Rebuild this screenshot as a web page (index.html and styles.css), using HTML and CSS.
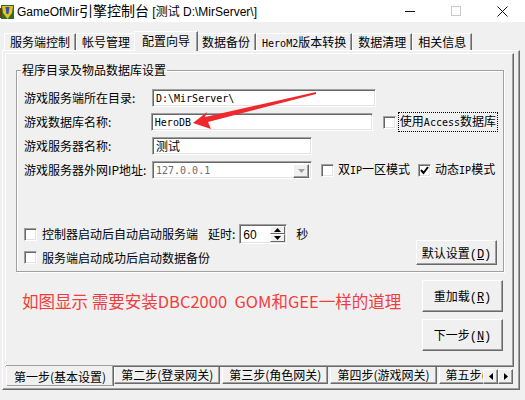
FILE: index.html
```html
<!DOCTYPE html>
<html>

<head>
    <meta charset="utf-8">
    <title>GameOfMir引擎控制台</title>
    <link rel="stylesheet" href="styles.css">
</head>

<body>
    <div class="titlebar">
        <svg class="appicon" width="15" height="16" viewBox="0 0 15 16">
            <rect x="1" y="1" width="13" height="14" fill="#2f6b2b" />
            <path d="M2 2 L13 2 L12 9 L7.5 15 L3 9 Z" fill="#e6c21a" />
            <path d="M5.5 3 L9.5 3 L8.5 10 L6.5 10 Z" fill="#2b4fb5" />
            <rect x="0" y="4" width="2" height="10" fill="#6b3d12" />
        </svg>
        <span class="title">GameOfMir<span class="cjk">引擎控制台</span> [测试 D:\MirServer\]</span>
        <div class="winbtns">
            <span class="wb"><i class="min"></i></span>
            <span class="wb"><i class="max"></i></span>
            <span class="wb">
                <svg width="11" height="11" viewBox="0 0 11 11">
                    <path d="M0.5 0.5 L10.5 10.5 M10.5 0.5 L0.5 10.5" stroke="#111" stroke-width="1" />
                </svg>
            </span>
        </div>
    </div>

    <div class="tabs">
        <div class="tab">服务端控制</div>
        <div class="tab">帐号管理</div>
        <div class="tab active">配置向导</div>
        <div class="tab">数据备份</div>
        <div class="tab"><span class="latin">HeroM2</span>版本转换</div>
        <div class="tab">数据清理</div>
        <div class="tab">相关信息</div>
    </div>

    <div class="page">
        <div class="wpage">
            <fieldset class="group">
                <legend>程序目录及物品数据库设置</legend>
                <div class="fields">
                    <div class="row">
                        <span class="lbl">游戏服务端所在目录:</span>
                        <div class="edit wide">D:\MirServer\</div>
                    </div>
                    <div class="row">
                        <span class="lbl">游戏数据库名称:</span>
                        <div class="edit wide">HeroDB</div>
                        <span class="cb cb-access"></span>
                        <span class="cblabel focus">使用<span class="latin">Access</span>数据库</span>
                    </div>
                    <div class="row">
                        <span class="lbl">游戏服务器名称:</span>
                        <div class="edit narrow">测试</div>
                    </div>
                    <div class="row">
                        <span class="lbl">游戏服务器外网IP地址:</span>
                        <div class="edit narrow combo">
                            <span class="ctext">127.0.0.1</span>
                            <span class="drop">
                                <svg width="7" height="4" viewBox="0 0 7 4"><path d="M0 0 H7 L3.5 4 Z" fill="#a0a0a0" /></svg>
                            </span>
                        </div>
                        <span class="cb cb-dual"></span>
                        <span class="cblabel">双<span class="latin">IP</span>一区模式</span>
                        <span class="cb cb-dyn">
                            <svg width="11" height="11" viewBox="0 0 11 11"><path d="M2 5 L4.5 8 L9 2" stroke="#000" stroke-width="2" fill="none" /></svg>
                        </span>
                        <span class="cblabel">动态<span class="latin">IP</span>模式</span>
                    </div>
                </div>

                <div class="bottom">
                    <div class="checks">
                        <div class="crow first">
                            <span class="cb"></span>
                            <span class="clabel">控制器启动后自动启动服务端</span>
                            <span class="delay">延时:</span>
                            <div class="spin">
                                <span class="val">60</span>
                                <span class="arrows">
                                    <span class="sbtn"><svg width="7" height="4" viewBox="0 0 7 4"><path d="M0 4 H7 L3.5 0 Z" fill="#000" /></svg></span>
                                    <span class="sbtn"><svg width="7" height="4" viewBox="0 0 7 4"><path d="M0 0 H7 L3.5 4 Z" fill="#000" /></svg></span>
                                </span>
                            </div>
                            <span class="sec">秒</span>
                        </div>
                        <div class="crow">
                            <span class="cb"></span>
                            <span class="clabel">服务端启动成功后启动数据备份</span>
                        </div>
                    </div>
                    <button class="btn">默认设置(<u>D</u>)</button>
                </div>
            </fieldset>

            <div class="lower">
                <p class="note">如图显示 需要安装DBC2000&nbsp; GOM和GEE一样的道理</p>
                <div class="btncol">
                    <button class="btn tall">重加载(<u>R</u>)</button>
                    <button class="btn tall">下一步(<u>N</u>)</button>
                </div>
            </div>
        </div>

        <div class="wtabs">
            <div class="strip">
                <div class="wtab active">第一步(基本设置)</div>
                <div class="wtab">第二步(登录网关)</div>
                <div class="wtab">第三步(角色网关)</div>
                <div class="wtab">第四步(游戏网关)</div>
                <div class="wtab">第五步(数据库服务)</div>
            </div>
            <div class="scroll">
                <span class="sbtn2"><svg width="4" height="7" viewBox="0 0 4 7"><path d="M4 0 V7 L0 3.5 Z" fill="#000" /></svg></span>
                <span class="sbtn2"><svg width="4" height="7" viewBox="0 0 4 7"><path d="M0 0 V7 L4 3.5 Z" fill="#000" /></svg></span>
            </div>
        </div>
    </div>

    <!-- 标注箭头 -->
    <svg class="arrow" width="525" height="400" viewBox="0 0 525 400">
        <polygon points="193,123 207,112 205,117 316,92 316,94 208,122 211,129" fill="#f0272b" />
    </svg>
</body>

</html>
```

FILE: styles.css
```css
* {
    box-sizing: border-box;
}

html,
body {
    margin: 0;
    padding: 0;
}

body {
    width: 525px;
    height: 400px;
    overflow: hidden;
    position: relative;
    background-color: #f0f0f0;
    font-family: "Noto Sans CJK SC", sans-serif;
    font-size: 12px;
    line-height: 16px;
    color: #000;
}

.latin {
    font-family: "DejaVu Sans Mono", monospace;
    font-size: 10px;
}

/* タイトルバー */
.titlebar {
    height: 22px;
    background-color: #fff;
    display: flex;
    align-items: center;
}

.appicon {
    margin-top: 1px;
}

.title {
    margin-left: 2px;
    font-family: "Liberation Sans", "Noto Sans CJK SC", sans-serif;
    font-size: 12px;
}

.title .cjk {
    font-family: "Noto Sans CJK SC", sans-serif;
    font-size: 14px;
}

.winbtns {
    margin-left: auto;
    display: flex;
}

.wb {
    width: 46px;
    height: 22px;
    display: flex;
    align-items: center;
    justify-content: center;
}

.wb .min {
    width: 10px;
    height: 1px;
    background-color: #111;
}

.wb .max {
    width: 10px;
    height: 10px;
    border: 1px solid #c8c8c8;
}

/* 上のタブ */
.tabs {
    display: flex;
    align-items: flex-end;
    height: 19px;
    margin-top: 9px;
    padding-left: 4px;
    position: relative;
    z-index: 1;
}

.tab {
    height: 17px;
    line-height: 16px;
    padding: 0 5px;
    border-top: 1px solid #fff;
    border-left: 1px solid #fff;
    border-right: 1px solid #696969;
    box-shadow: inset -1px 0 0 #a0a0a0;
    white-space: nowrap;
}

.tab.active {
    height: 20px;
    margin: 0 -2px -1px;
    padding: 1px 7px 0;
    background-color: #f0f0f0;
    position: relative;
    z-index: 2;
}

.page {
    margin-left: 2px;
    width: 518px;
    height: 340px;
    padding: 2px 0 0 2px;
    border-top: 1px solid #fff;
    border-left: 1px solid #fff;
    border-right: 1px solid #696969;
    border-bottom: 1px solid #696969;
    box-shadow: inset -1px -1px 0 #a0a0a0;
}

.wpage {
    width: 509px;
    height: 314px;
    border-top: 1px solid #fff;
    border-left: 1px solid #fff;
    border-right: 1px solid #696969;
    border-bottom: 1px solid #696969;
    box-shadow: inset -1px -1px 0 #a0a0a0;
    padding-top: 8px;
}

/* グループ */
.group {
    margin: 0 0 0 10px;
    width: 488px;
    min-width: 0;
    padding: 11px 6px 6px 7px;
    border: 1px solid #a0a0a0;
    box-shadow: inset 1px 1px 0 #fff, 1px 1px 0 #fff;
}

.group legend {
    padding: 0 1px;
    margin-left: -3px;
    line-height: 16px;
}

.fields {
    display: flex;
    flex-direction: column;
    gap: 6px;
}

.row {
    display: flex;
    align-items: center;
    height: 18px;
}

.lbl {
    width: 128px;
    white-space: nowrap;
}

.edit {
    height: 18px;
    background-color: #fff;
    border-top: 1px solid #a0a0a0;
    border-left: 1px solid #a0a0a0;
    border-right: 1px solid #fff;
    border-bottom: 1px solid #fff;
    box-shadow: inset 1px 1px 0 #696969, inset -1px -1px 0 #e3e3e3;
    padding: 2px 0 0 3px;
    font-family: "DejaVu Sans Mono", "Noto Sans CJK SC", monospace;
    font-size: 10px;
    line-height: 14px;
    white-space: nowrap;
}

.edit.wide {
    width: 224px;
}

.edit.narrow {
    width: 160px;
    font-size: 12px;
}

.combo {
    display: flex;
    padding: 2px 2px 0 3px;
}

.combo .ctext {
    flex: 1;
    font-size: 10px;
    color: #6d6d6d;
}

.drop {
    width: 16px;
    height: 14px;
    display: flex;
    align-items: center;
    justify-content: center;
    background-color: #f0f0f0;
    border-top: 1px solid #fff;
    border-left: 1px solid #fff;
    border-right: 1px solid #696969;
    border-bottom: 1px solid #696969;
    box-shadow: inset -1px -1px 0 #a0a0a0;
}

.cb {
    width: 13px;
    height: 13px;
    flex: none;
    background-color: #fff;
    border-top: 1px solid #a0a0a0;
    border-left: 1px solid #a0a0a0;
    border-right: 1px solid #fff;
    border-bottom: 1px solid #fff;
    box-shadow: inset 1px 1px 0 #696969, inset -1px -1px 0 #e3e3e3;
    display: flex;
    align-items: center;
    justify-content: center;
}

.cb-access {
    margin-left: 10px;
}

.cb-dual {
    margin-left: 9px;
}

.cb-dyn {
    margin-left: 8px;
}

.cblabel {
    margin-left: 4px;
    white-space: nowrap;
}

.cblabel.focus {
    outline: 1px dotted #000;
    outline-offset: 0;
    padding: 0 1px;
    margin-left: 3px;
}

.bottom {
    margin-top: 45px;
    display: flex;
    justify-content: space-between;
    align-items: flex-end;
}

.crow {
    display: flex;
    align-items: center;
    height: 15px;
}

.crow.first {
    height: 20px;
    margin-bottom: 6px;
}

.clabel {
    margin-left: 5px;
    white-space: nowrap;
}

.delay {
    margin-left: 10px;
}

.spin {
    margin-left: 4px;
    width: 48px;
    height: 20px;
    display: flex;
    background-color: #fff;
    border-top: 1px solid #a0a0a0;
    border-left: 1px solid #a0a0a0;
    border-right: 1px solid #fff;
    border-bottom: 1px solid #fff;
    box-shadow: inset 1px 1px 0 #696969, inset -1px -1px 0 #e3e3e3;
    padding: 1px 1px 1px 1px;
}

.spin .val {
    flex: 1;
    padding: 1px 0 0 2px;
    font-family: "Liberation Sans", sans-serif;
    font-size: 12px;
}

.spin .arrows {
    width: 15px;
    display: flex;
    flex-direction: column;
}

.sbtn {
    flex: 1;
    display: flex;
    align-items: center;
    justify-content: center;
    background-color: #f0f0f0;
    border-top: 1px solid #fff;
    border-left: 1px solid #fff;
    border-right: 1px solid #696969;
    border-bottom: 1px solid #696969;
}

.sec {
    margin-left: 9px;
}

.btn {
    width: 81px;
    height: 25px;
    padding: 0;
    background-color: #f0f0f0;
    border-top: 1px solid #fff;
    border-left: 1px solid #fff;
    border-right: 1px solid #696969;
    border-bottom: 1px solid #696969;
    box-shadow: inset -1px -1px 0 #a0a0a0;
    font-family: "Liberation Mono", "Noto Sans CJK SC", monospace;
    font-size: 12px;
    color: #000;
}

.btn.tall {
    height: 32px;
}

/* 下の部分 */
.lower {
    display: flex;
    justify-content: space-between;
    margin-left: 10px;
    width: 487px;
}

.note {
    margin: 18px 0 0 6px;
    font-size: 16.5px;
    line-height: 22px;
    color: #f23c3c;
    white-space: nowrap;
}

.btncol {
    margin-top: 8px;
    display: flex;
    flex-direction: column;
    gap: 7px;
}

/* 下のタブ */
.wtabs {
    display: flex;
    width: 508px;
    height: 20px;
    margin-top: -1px;
    padding-left: 1px;
    position: relative;
}

.strip {
    flex: 1;
    display: flex;
    align-items: flex-start;
    overflow: hidden;
}

.wtab {
    flex: none;
    height: 17px;
    margin-top: 1px;
    margin-right: 2px;
    padding: 0 6px;
    line-height: 15px;
    border-left: 1px solid #fff;
    border-right: 1px solid #696969;
    border-bottom: 1px solid #696969;
    box-shadow: inset -1px -1px 0 #a0a0a0;
    white-space: nowrap;
}

.wtab.active {
    height: 21px;
    margin-top: 0;
    margin-right: 0;
    padding: 2px 7px 0;
    line-height: 17px;
    background-color: #f0f0f0;
}

.scroll {
    display: flex;
    margin-top: 3px;
}

.sbtn2 {
    width: 15px;
    height: 15px;
    display: flex;
    align-items: center;
    justify-content: center;
    background-color: #f0f0f0;
    border-top: 1px solid #fff;
    border-left: 1px solid #fff;
    border-right: 1px solid #696969;
    border-bottom: 1px solid #696969;
    box-shadow: inset -1px -1px 0 #a0a0a0;
}

.arrow {
    position: absolute;
    top: 0;
    left: 0;
    pointer-events: none;
}
```
